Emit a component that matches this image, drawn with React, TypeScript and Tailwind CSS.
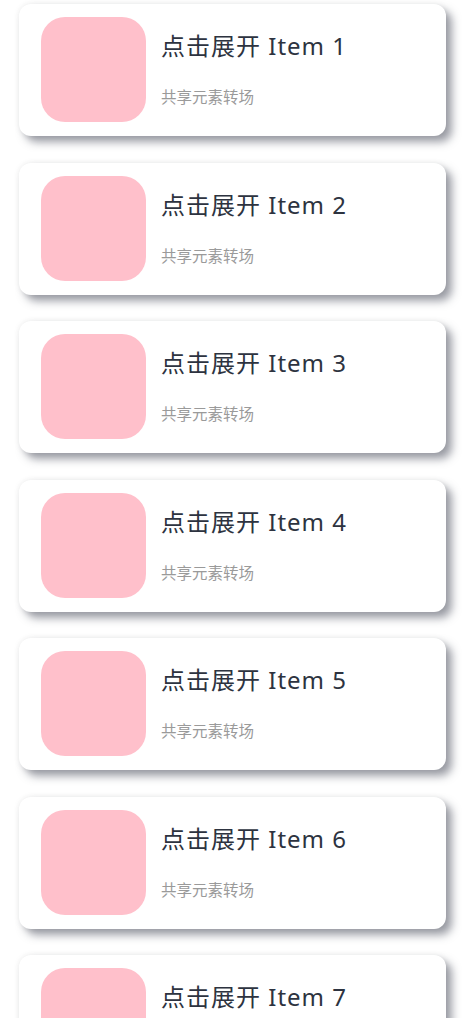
const items = [1, 2, 3, 4, 5, 6, 7]

const ItemCard = ({ index }: { index: number }) => (
  <div className="flex h-[132px] shrink-0 items-start rounded-[12px] bg-white pl-[22px] pt-[13px] shadow-[0_0_6px_rgba(0,0,0,0.07),6px_6px_8px_rgba(60,64,80,0.5)]">
    <div className="h-[105px] w-[105px] shrink-0 rounded-[24px] bg-[#ffc0cb]" />
    <div className="flex flex-col pl-[15px]">
      <span className="mt-[13px] text-[24px] leading-[32px] tracking-[1px] text-[#2d3340]">
        点击展开 Item {index}
      </span>
      <span className="mt-[25px] text-[15.5px] leading-[20px] text-[#9a9a9a]">
        共享元素转场
      </span>
    </div>
  </div>
)

export default function App() {
  return (
    <div
      className="flex h-[1018px] flex-col gap-[26.5px] overflow-hidden bg-white px-[19px] pt-[4px]"
      style={{ fontFamily: '"Noto Sans", "Noto Sans CJK SC", sans-serif' }}
    >
      {items.map((i) => (
        <ItemCard key={i} index={i} />
      ))}
    </div>
  )
}
